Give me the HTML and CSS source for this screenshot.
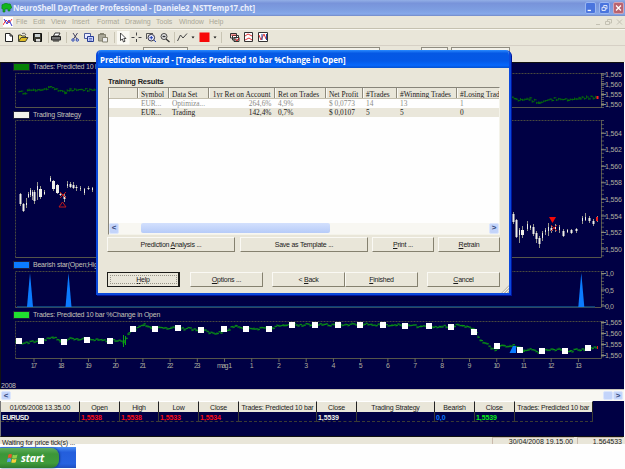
FILE: index.html
```html
<!DOCTYPE html>
<html lang="en">
<head>
<meta charset="utf-8">
<title>NeuroShell DayTrader Professional</title>
<link rel="stylesheet" href="styles.css">
</head>
<body>
<div class="app">
  <header class="titlebar">
    <svg class="app-icon" width="11" height="10" viewBox="0 0 11 10"><path d="M1 4Q0 1 3 1Q5-1 7 1Q10 0 10 3Q12 5 9 6L9 8H7V6H4V9H2V6Q0 6 1 4Z" fill="#12b51d" stroke="#067a1c" stroke-width=".6"/></svg>
    <h1>NeuroShell DayTrader Professional - [Daniele2_NSTTemp17.cht]</h1>
    <div class="win-buttons">
      <span class="wb"><svg viewBox="0 0 11 11"><path d="M2 8.5H6" stroke="#fff" stroke-width="1.6"/></svg></span>
      <span class="wb"><svg viewBox="0 0 11 11"><path d="M4.5 4V2.5H8.5V6.5H7M2.5 4.7H6.5V8.5H2.5Z" fill="none" stroke="#fff"/></svg></span>
      <span class="wb close"><svg viewBox="0 0 11 11"><path d="M2.5 2.5L8.5 8.5M8.5 2.5L2.5 8.5" stroke="#fff" stroke-width="1.6"/></svg></span>
    </div>
  </header>
  <nav class="menubar">
    <svg width="10" height="10" viewBox="0 0 10 10"><rect width="10" height="10" fill="#fff"/><path d="M0 8L3 3L6 6L9 2" fill="none" stroke="#f33"/><path d="M1 2L4 7L6 3L9 9" fill="none" stroke="#33c"/></svg>
    <span class="m1">File</span><span class="m2">Edit</span><span class="m3">View</span><span class="m4">Insert</span><span class="m5">Format</span><span class="m6">Drawing</span><span class="m7">Tools</span><span class="m8">Window</span><span class="m9">Help</span>
    <svg class="mdi" width="32" height="8" viewBox="0 0 32 8" fill="none" stroke="#c4c1b3"><path d="M3 6.500H7M14.500 3V1.500H18.500V5H17M12.500 3.500H16.500V6.500H12.500ZM24 1.500L29 6.500M29 1.500L24 6.500"/></svg>
  </nav>
  <div class="toolbar">
    <svg width="280" height="16" viewBox="0 30 280 16">
      <path d="M5.500 33.500H10L12.500 36V41.500H5.500ZM10 33.500V36H12.500" fill="#fff" stroke="#222"/>
      <path d="M18.500 41V35H21L22 36H25.500V37.500" fill="#f3e45c" stroke="#443"/><path d="M18.500 41.500L21 37.500H28L25.500 41.500Z" fill="#e0bc22" stroke="#443"/><path d="M22 33.500Q25 32 26 35" fill="none" stroke="#333" stroke-width=".7"/>
      <path d="M33.500 33.500H41.500V41.500H34.500L33.500 40.500Z" fill="#3c3c32" stroke="#111"/><path d="M35 34H40V37H35Z" fill="#c9d0d0"/><path d="M36 39H40V41.500H36Z" fill="#ddd"/>
      <path d="M53.500 36L55 33H60L58.500 36Z" fill="#fff" stroke="#333"/><path d="M51.500 36.500H60.500V40H51.500ZM53 41H59" fill="#777" stroke="#222"/>
      <path d="M73 33L77 39M77.500 33L73.500 39" stroke="#335" stroke-width=".9"/><g fill="none" stroke="#2744b5"><circle cx="73" cy="40" r="1.200"/><circle cx="77.300" cy="40" r="1.200"/></g>
      <path d="M84.500 33.500H90.500V38.500H84.500Z" fill="#e8ebff" stroke="#4a5a9b"/><path d="M87.500 36.500H93.500V41.500H87.500Z" fill="#c7d0ff" stroke="#263c93"/><path d="M89 38.500H92M89 40H92" stroke="#263c93" stroke-width=".6"/>
      <path d="M98.500 34.500H105.500V41H98.500Z" fill="#aaa898" stroke="#858372"/><path d="M102.500 37.500H107.500V42H102.500Z" fill="#eee" stroke="#858372"/><path d="M100 33.500H104" stroke="#858372"/>
      <rect x="117" y="31" width="12.500" height="13.500" fill="#faf9f3"/><path d="M120.500 33L120.500 40.500L122.300 39L123.500 42L125 41.300L123.800 38.500H126Z" fill="#fff" stroke="#222" stroke-width=".8"/>
      <path d="M136.500 32.500V35.500M136.500 39V42M131.500 37.500H134.500M138.500 37.500H141.500" stroke="#444"/>
      <path d="M146.500 39V33.500H153" fill="none" stroke="#555"/><circle cx="151.300" cy="37.700" r="3.300" fill="#eef" stroke="#334"/><path d="M149.500 37.700H153M151.300 36V39.500M153.800 40L156 42" stroke="#2342b0"/>
      <circle cx="164" cy="36.500" r="3" fill="#eee" stroke="#444"/><path d="M162.500 36.500H165.500M166 39L169.500 42" stroke="#333" stroke-width="1.300"/>
      <path d="M177.500 41L180.500 35L183 38L187 33.500" fill="none" stroke="#444"/>
      <path d="M191.500 36.500H194.500L193 38.500ZM213.500 36.500H216.500L215 38.500Z" fill="#111"/>
      <rect x="199.500" y="32.500" width="10" height="9.500" fill="#f70808"/>
      <path d="M48.500 32V43M66.500 32V43M114.500 32V43M174.500 32V43M221.500 32V43" stroke="#c9c5b4"/>
      <g stroke="#333" fill="#fff"><path d="M230.500 33.500H236.500V38H230.500ZM232.500 35.500H238.500V40H232.500ZM234 37.500H239V41.500H234Z"/><path d="M244.500 32.500H252.500V41.500H244.500ZM258.500 32.500H267.500V41.500H258.500Z"/></g>
      <path d="M231 35H236M235 39L237 41L239 38M245 36L248 34L252 36M245 40L249 38L252 40M259 35L261 40L264 34L266 39" fill="none" stroke="#e23434"/><path d="M262 34V40M266.500 34V40" stroke="#223f9b"/>
    </svg>
  </div>
  <div class="strip"><i class="b1"></i><i class="b2"></i><i class="b3"></i><i class="b4"></i></div>

  <main class="charts">
    <div class="legend"><i class="sw dark"></i>Trades: Predicted 10 bar %Change in Open</div>
    <svg id="p1" class="plot" width="623" height="40" viewBox="1 71 623 40"></svg>
    <div class="legend"><i class="sw white"></i>Trading Strategy</div>
    <svg id="p2" class="plot" width="623" height="142" viewBox="1 119 623 142"></svg>
    <div class="legend"><i class="sw blue"></i>Bearish star(Open;High;Low;Close)</div>
    <svg id="p3" class="plot" width="623" height="42" viewBox="1 269 623 42"></svg>
    <div class="legend"><i class="sw green"></i>Trades: Predicted 10 bar %Change in Open</div>
    <svg id="p4" class="plot" width="623" height="61" viewBox="1 319 623 61"></svg>
    <div class="year">2008</div>
  </main>

  <div class="hscroll"><span class="arrow">&lt;</span><span class="track"></span><span class="arrow"></span><span class="arrow">&gt;</span></div>

  <section class="quotes">
    <div class="qrow qhead"><span>01/05/2008 13.35.00</span><span>Open</span><span>High</span><span>Low</span><span>Close</span><span>Trades: Predicted 10 bar</span><span>Close</span><span>Trading Strategy</span><span>Bearish</span><span>Close</span><span>Trades: Predicted 10 bar</span></div>
    <div class="qrow qdata"><span>EURUSD</span><span class="r">1,5538</span><span class="r">1,5538</span><span class="r">1,5533</span><span class="r">1,5534</span><span></span><span>1,5539</span><span></span><span class="b">0,0</span><span class="g">1,5539</span><span></span></div>
  </section>
  <footer class="status"><span class="msg">Waiting for price tick(s) ...</span><span class="cell c1">30/04/2008 19.15.00</span><span class="cell c2">1,564533</span></footer>
  <div class="taskbar"><div class="start"><svg width="11" height="11" viewBox="0 0 11 11"><path d="M1.500 1.500Q3 .5 5 1.500L4.300 5Q2.500 4 .8 5Z" fill="#f0532b"/><path d="M5.800 1.700Q8 2.700 10.500 1.500L9.700 5Q7.500 6 5.100 5.200Z" fill="#8fd04a"/><path d="M.6 5.700Q2.400 4.900 4.200 5.800L3.500 9.200Q1.800 8.300 0 9.200Z" fill="#5b9df5"/><path d="M5 6Q7.300 6.900 9.500 5.800L8.800 9.300Q6.500 10.300 4.300 9.500Z" fill="#fbd13a"/></svg>start</div></div>

  <div class="dialog">
    <div class="dlg-title">Prediction Wizard - [Trades: Predicted 10 bar %Change in Open]</div>
    <div class="dlg-body">
      <h2>Training Results</h2>
      <div class="list">
        <div class="lrow lhead"><span></span><span>Symbol</span><span>Data Set</span><span class="num">1yr Ret on Account</span><span>Ret on Trades</span><span>Net Profit</span><span>#Trades</span><span>#Winning Trades</span><span>#Losing Trades</span></div>
        <div class="lrow dim"><span></span><span>EUR...</span><span>Optimiza...</span><span class="num">264,6%</span><span>4,9%</span><span>$ 0,0773</span><span>14</span><span>13</span><span>1</span></div>
        <div class="lrow sel"><span></span><span>EUR...</span><span>Trading</span><span class="num">142,4%</span><span>0,7%</span><span>$ 0,0107</span><span>5</span><span>5</span><span>0</span></div>
        <div class="hscroll inner"><span class="arrow">&lt;</span><span class="track"><i class="thumb"></i></span><span class="arrow">&gt;</span></div>
      </div>
      <div class="btns row1"><button>Prediction <u>A</u>nalysis ...</button><button>Save as Template ...</button><button><u>P</u>rint ...</button><button><u>R</u>etrain</button></div>
      <div class="btns row2"><button class="default"><u>H</u>elp</button><button><u>O</u>ptions ...</button><button>&lt; <u>B</u>ack</button><button><u>F</u>inished</button><button><u>C</u>ancel</button></div>
    </div>
    <svg class="grip" width="8" height="8" viewBox="0 0 8 8"><path d="M0 8L8 0V8Z" fill="#c3c0b3"/><path d="M2 8L8 2M5 8L8 5" stroke="#fff" stroke-width=".8"/></svg>
  </div>
</div>
<script src="charts.js"></script>
</body>
</html>
```
FILE: styles.css
```css
* { box-sizing: border-box; }
body { margin: 0; background: #fefefe; font-family: "Liberation Sans", Arial, sans-serif; font-size: 7px; color: #222; overflow: hidden; }
.app { position: relative; width: 625px; height: 469px; overflow: hidden; display: flex; flex-direction: column; }

.titlebar { flex: none; height: 16px; display: flex; align-items: center; padding: 0 1px; background: linear-gradient(#93afe6, #7893da 20%, #7e9fe2 65%, #86a9ea 88%, #7389c6); }
.app-icon { margin-right: 1px; }
.titlebar h1 { margin: 0; font: bold 7.9px "Open Sans", sans-serif; color: #e9eefb; white-space: nowrap; letter-spacing: -.11px; }
.win-buttons { margin-left: auto; display: flex; gap: 3px; }
.wb { width: 11px; height: 12px; background: #4a75de; border: 1px solid #9ab6f1; border-radius: 2px; display: flex; }
.wb.close { background: #b9636f; border-color: #d3a4b5; }
.wb svg { width: 100%; height: 100%; }

.menubar { flex: none; height: 13px; display: flex; align-items: center; background: #e9e6d9; border-bottom: 1px solid #c5c1b0; color: #aaa797; padding-left: 3px; line-height: 8px; }
.menubar span { flex: none; }
.m1 { width: 17px; margin-left: 3px; } .m2 { width: 18px; } .m3 { width: 21px; } .m4 { width: 25px; } .m5 { width: 28px; } .m6 { width: 31px; } .m7 { width: 23px; } .m8 { width: 30px; }
.mdi { margin-left: auto; }
.toolbar { flex: none; height: 17px; background: #e9e6d9; border-top: 1px solid #f8f7f0; border-bottom: 1px solid #d6d0c5; }
.toolbar svg { display: block; }
.strip { flex: none; height: 16px; background: #e9e6d9; display: flex; padding: 1px 0 0 143px; }
.strip i { height: 10px; border: 1px solid #8f8c80; background: #f3f1e8; flex: none; }
.b1 { width: 45px; margin-right: 30px; } .b2 { width: 162px; margin-right: 41px; } .b3 { width: 27px; margin-right: 3px; } .b4 { width: 59px; }

.charts { flex: none; height: 327px; width: 624px; background: #000044; border: solid #111; border-width: 1px 0 0 1px; color: #c4c4b8; display: flex; flex-direction: column; }
.legend { flex: none; height: 8px; line-height: 8px; display: flex; align-items: center; padding-left: 13px; letter-spacing: -.22px; white-space: nowrap; }
.sw { width: 15px; height: 6px; margin-right: 4px; outline: 1px solid #1d1d3a; }
.dark { background: #058205; } .white { background: #f2f1ec; } .blue { background: #0b7bff; } .green { background: #20e030; }
.plot { flex: none; display: block; }
.plot text { font: 7px "Liberation Sans", Arial, sans-serif; fill: #aeae9e; }
.year { line-height: 8px; margin-top: 2px; letter-spacing: -.2px; }

.hscroll { flex: none; height: 12px; width: 624px; display: flex; background: #f8f7f2; padding: 1px; border-top: 1px solid #c9c7b8; }
.arrow { width: 10px; background: #c3d4fa; border: 1px solid #dce6fd; border-radius: 2px; color: #33487c; font: bold 8px/8px "Liberation Sans", sans-serif; text-align: center; flex: none; }
.track { flex: 1; }
.quotes { flex: none; height: 36px; width: 624px; background: #000044; border-left: 1px solid #777; border-bottom: 1px solid #111; }
.qrow { display: grid; grid-template-columns: 79px 40px 39px 40px 40px 78px 40px 78px 40px 39.500px 78.500px; width: 592px; height: 11px; line-height: 11px; }
.qrow span { white-space: nowrap; overflow: hidden; }
.qhead { letter-spacing: -.2px; }
.qhead span { background: #e9e6d9; text-align: center; border-right: 1px solid #222; border-top: 1px solid #fff; }
.qdata { height: 10px; line-height: 11px; color: #f1f1e8; font-weight: bold; letter-spacing: -.1px; }
.qdata span:first-child { letter-spacing: -.5px; }
.qdata span { border-right: 1px solid #3a3a34; border-bottom: 1px dashed #3a3a34; padding-left: 1px; }
.qdata .r { color: #fa0c14; } .qdata .b { color: #0878ff; } .qdata .g { color: #08ee18; }
.status { flex: none; height: 7px; display: flex; background: #e9e6d9; padding-left: 2px; line-height: 11px; white-space: nowrap; }
.msg { flex: 0 0 490px; height: 9px; letter-spacing: -.2px; }
.cell { height: 7px; overflow: hidden; text-align: right; border-left: 1px solid #c9b9ac; border-top: 1px solid #c9b9ac; line-height: 8px; flex: none; }
.c1 { width: 82px; padding-right: 1px; margin-right: 3px; } .c2 { width: 46px; padding-right: 1px; }
.taskbar { flex: none; margin-top: 3px; width: 76px; height: 21px; background: linear-gradient(#4a8ff4, #245edc 25%, #2663e0 80%, #1f4fbd); padding-top: 1px; }
.start { width: 59px; height: 20px; border-radius: 0 8px 8px 0; background: linear-gradient(#5fae5d, #3c9638 30%, #3f9c3c 75%, #2d7a2d); box-shadow: 1px 0 2px #123a8a; color: #fff; font: italic bold 10.4px/18px "Open Sans", sans-serif; letter-spacing: -.2px; display: flex; align-items: center; padding-left: 7px; gap: 3px; }

.dialog { position: absolute; left: 96px; top: 50px; width: 415px; height: 245px; background: #e9e6d9; border: solid #0b49dc; border-width: 0 2px 2px; border-radius: 5px 5px 0 0; overflow: hidden; box-shadow: 1px 1px 0 #00159b; }
.dlg-title { height: 18px; margin: 0 -2px; padding-left: 4px; background: linear-gradient(#2a8bff, #0558e4 18%, #0458e6 60%, #0667fb 85%, #0450cf); color: #fff; font: bold 7.9px/20px "Open Sans", sans-serif; letter-spacing: -.04px; white-space: nowrap; }
.dlg-body { padding: 9px 8px 0 9px; }
.dlg-body h2 { margin: 0 0 1px 1px; font-size: 7.5px; line-height: 9px; letter-spacing: -.18px; }
.list { margin-left: 1px; width: 392px; height: 148px; background: #fefefe; border: 1px solid #88857a; border-right-color: #f4f3ea; border-bottom-color: #f4f3ea; display: flex; flex-direction: column; }
.lrow { display: grid; grid-template-columns: 28.500px 31px 40px 66px 51px 37px 34px 60px 42.500px; height: 9px; line-height: 10px; font-family: "Liberation Serif", "Times New Roman", serif; font-size: 7.4px; color: #1a1a1a; }
.lrow span { white-space: nowrap; overflow: hidden; padding-left: 3.500px; }
.lrow .num { text-align: right; padding: 0 3px 0 0; }
.lhead { height: 11px; line-height: 13px; background: #e9e6d9; border-bottom: 1px solid #c3beac; }
.lhead span { border-right: 1px solid #8e8a7c; border-left: 1px solid #faf9f4; padding-left: 2.500px; }
.lhead span:last-child { border-right: 0; }
.dim { color: #8c8c88; }
.sel { background: #eae7db; }
.inner { width: 390px; height: 11px; margin-top: auto; padding: 0; border: 0; }
.thumb { display: block; width: 189px; height: 10px; margin-left: 22px; background: linear-gradient(#d3e0fd, #b6cbf8); border-radius: 2px; }
.btns { display: flex; }
.btns button { flex: none; font: 7px/8px "Liberation Sans", Arial, sans-serif; letter-spacing: -.24px; color: #1a1a1a; background: #e9e6d9; border: 1px solid #faf9f4; border-right-color: #85816f; border-bottom-color: #85816f; padding: 1px 0 0; height: 15px; }
.row1 { margin-top: 2px; }
.row1 button:nth-child(1) { width: 128px; } .row1 button:nth-child(2) { width: 128px; margin-left: 5px; } .row1 button:nth-child(3) { width: 62px; margin-left: 4px; } .row1 button:nth-child(4) { width: 62px; margin-left: 4px; }
.row2 { margin-top: 20px; }
.row2 button { width: 73px; }
.row2 button:nth-child(2) { margin-left: 10px; } .row2 button:nth-child(3) { margin-left: 9px; } .row2 button:nth-child(5) { margin-left: 9px; }
.btns .default { border: 1px solid #1c1c18; border-right-width: 2px; outline: 1px dotted #99968a; outline-offset: -4px; }
.grip { position: absolute; right: 0; bottom: 0; }
```
FILE: charts.js
```js
const NS = "http://www.w3.org/2000/svg";
function add(id, tag, attrs, text) {
  const el = document.createElementNS(NS, tag);
  for (const k in attrs) el.setAttribute(k, attrs[k]);
  if (text) el.textContent = text;
  document.getElementById(id).appendChild(el);
}
const path = (id, d, stroke, extra) => add(id, "path", { d, stroke, fill: "none", ...extra });

function frame(id, top, bottom, labels, minor) {
  path(id, `M15.500 ${bottom}V${top}H601.500`, "#48483e", { "stroke-dasharray": "2 1" });
  path(id, `M15.500 ${bottom}H601.500V${top}`, "#55554a");
  let d = "";
  for (let y = top; y <= bottom; y += minor) d += `M601 ${y}h3`;
  path(id, d, "#77776a", { "stroke-width": 0.7 });
  for (const [t, y] of labels) {
    path(id, `M601 ${y}h5`, "#8a8a7a");
    add(id, "text", { x: 605, y: y + 2.5, textLength: t.length > 3 ? 17 : 9 }, t);
  }
}
frame("p1", 73.5, 107.5, [["1,565", 74], ["1,560", 84], ["1,555", 94.5], ["1,550", 104.5]], 2);
frame("p2", 120.5, 257.5, [["1,564", 133.3], ["1,562", 149.8], ["1,560", 166.3], ["1,558", 182.8], ["1,556", 199.3], ["1,554", 216], ["1,552", 232.5], ["1,550", 249]], 4.1);
frame("p3", 271.5, 307.5, [["1,0", 273.5], ["0,5", 290], ["0,0", 306]], 3.3);
frame("p4", 321.5, 358.5, [["1,565", 322.5], ["1,560", 333.5], ["1,555", 344.5], ["1,550", 355.5]], 2.2);

// Small bar-to-bar variation that is the same on every load
const jitter = i => Math.sin(i * 12.99) * 0.6 + Math.sin(i * 4.1) * 0.6;
function bars(id, pts, color, step) {
  let d = "";
  for (let i = 0; i < pts.length - 1; i++) {
    const [x0, y0] = pts[i], [x1, y1] = pts[i + 1];
    for (let x = x0; x < x1; x += step) {
      const y = y0 + (y1 - y0) * (x - x0) / (x1 - x0) + jitter(x);
      d += `M${x} ${(y - 1).toFixed(1)}v${(1.5 + Math.abs(jitter(x * 3))).toFixed(1)}m0 -1h${step}`;
    }
  }
  path(id, d, color, { "stroke-width": 0.9 });
}

bars("p1", [[19, 91], [23, 94], [29, 90], [42, 90], [50, 87], [56, 90], [65, 92], [70, 90], [95, 90]], "#067008", 2.2);
bars("p1", [[512, 97], [516, 100], [530, 99], [539, 103], [552, 99], [568, 100], [580, 98], [597, 97]], "#067008", 2.2);
path("p1", "M597.500 96v3", "#f22", { "stroke-width": 2 });

// x, high, low, body top, body bottom, body width
const candles = [
  [20, 193, 206, 194, 204, 2], [23, 203, 212, 204, 211, 2], [26, 198, 208, 203, 205, 1], [28, 192, 198, 194, 197, 1],
  [30, 188, 197, 190, 195, 1], [32, 190, 200, 192, 196, 1], [34, 190, 204, 192, 201, 2], [37, 182, 200, 186, 190, 1],
  [40, 186, 199, 189, 197, 3], [44, 190, 195, 192, 194, 1], [50, 176, 182, 178, 181, 1], [53, 180, 191, 181, 189, 3],
  [57, 184, 194, 185, 193, 3], [60, 193, 196, 194, 195, 2], [64, 193, 202, 196, 199, 2], [67, 181, 188, 184, 186, 1],
  [70, 182, 188, 184, 187, 2], [73, 182, 189, 185, 188, 2], [76, 185, 191, 187, 188, 2], [80, 186, 191, 188, 189, 1],
  [84, 188, 195, 189, 193, 1], [88, 186, 190, 188, 189, 2], [92, 187, 192, 188, 190, 1],
  [513, 212, 224, 214, 222, 2], [516, 219, 238, 220, 237, 2], [519, 228, 243, 230, 235, 1], [522, 226, 238, 230, 235, 3],
  [527, 221, 231, 224, 229, 1], [530, 225, 230, 226, 228, 1], [533, 224, 236, 227, 234, 2], [536, 231, 243, 233, 239, 2],
  [539, 236, 248, 238, 244, 2], [542, 231, 241, 233, 238, 1], [545, 228, 235, 230, 232, 1], [548, 223, 236, 227, 231, 1],
  [551, 226, 233, 228, 231, 2], [555, 224, 232, 226, 229, 1], [559, 225, 233, 227, 230, 1], [563, 229, 237, 231, 236, 2],
  [567, 229, 233, 230, 232, 1], [571, 229, 234, 230, 233, 2], [576, 228, 233, 229, 231, 2], [582, 216, 224, 218, 221, 1],
  [585, 213, 221, 217, 220, 1], [589, 216, 223, 218, 221, 2], [593, 219, 226, 221, 224, 2], [597, 216, 222, 217, 221, 1]
];
for (const [x, h, l, t, b, w] of candles) {
  path("p2", `M${x + 0.5} ${h}V${l}`, "#94948a");
  add("p2", "rect", { x: x + 0.5 - w / 2, y: t, width: w, height: b - t, fill: "#efefe8" });
}
path("p2", "M60 192l6 6M66 192l-6 6M62.500 202l-3.500 5h7ZM551 225l6 6M557 225l-6 6", "#c01818");
add("p2", "path", { d: "M549 217h7l-3.500 6z", fill: "#f40808" });
add("p2", "rect", { x: 596, y: 217, width: 2, height: 4, fill: "#f02020" });

path("p3", "M17 306.800H595", "#0c3f78", { "stroke-width": 1.6 });
for (const x of [30, 68.5, 581.3])
  add("p3", "path", { d: `M${x - 3} 307L${x - 1} 284L${x} 273L${x + 1} 284L${x + 3} 307z`, fill: "#0b7bff" });

const marks = [[18.5, 340.5], [41, 341], [64, 342], [86.500, 339.5], [109.5, 341], [132.5, 329], [155, 329], [177.5, 328], [200.5, 329.5], [223.5, 329], [246, 329], [269, 329], [291.5, 324.5], [314.5, 324.5], [337.5, 324.5], [360, 324.5], [382.5, 324.5], [405, 325.5], [428.5, 325.5], [451, 327], [473.5, 331.5], [497, 345.5], [519.5, 350], [542, 350.5], [565, 350.5], [587.5, 348]];
bars("p4", [[16, 341], [24, 344], [32, 341], [41, 341], [51, 337], [60, 341], [70, 339], [86, 339], [109, 341], [124, 341], [129, 333], [137, 327], [144, 325], [151, 328], [178, 328], [201, 330], [217, 334], [236, 326], [246, 329], [269, 328], [284, 325], [360, 324.500], [405, 325.500], [440, 327], [463, 325], [474, 330], [481, 341], [495, 350], [500, 346], [513, 346], [524, 350], [534, 350], [539, 353], [551, 349], [570, 351], [598, 347]], "#0a9a12", 2);
path("p4", "M123.500 335v12M125.500 336v9", "#0aa312");
path("p4", "M597.500 346v3", "#d22");
add("p4", "path", { d: "M509.500 353l3.500-7h3v7z", fill: "#0b7bff" });
for (const [x, y] of marks) add("p4", "rect", { x: Math.round(x - 3), y: Math.round(y - 3), width: 6, height: 6, fill: "#fff" });

const dates = ["17", "18", "19", "20", "21", "22", "23", "mag 1", "1", "2", "3", "4", "5", "6", "7", "8", "9", "10", "11", "12", "13"];
dates.forEach((t, i) => {
  const x = 34 + i * 27.22;
  path("p4", `M${x} 358v4`, "#66665a");
  add("p4", "text", { x, y: 368, "text-anchor": "middle", textLength: t.length > 2 ? 15 : t.length * 3.2 }, t);
});
```
